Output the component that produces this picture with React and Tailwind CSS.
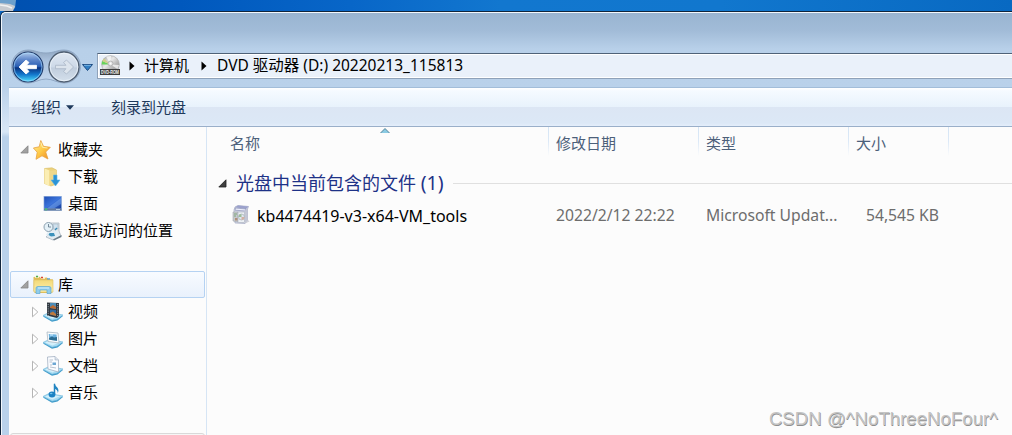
import React from "react";

function NavButtons() {
  return (
    <svg width="88" height="38" viewBox="9 48 88 38" className="block shrink-0">
      <defs>
        <linearGradient id="back" x1="0" y1="0" x2="0" y2="1">
          <stop offset="0" stopColor="#b4cdec" />
          <stop offset=".25" stopColor="#6088cb" />
          <stop offset=".48" stopColor="#2a5fb4" />
          <stop offset=".53" stopColor="#0a3280" />
          <stop offset=".75" stopColor="#1478cc" />
          <stop offset="1" stopColor="#4fe4ff" />
        </linearGradient>
        <linearGradient id="fwd" x1="0" y1="0" x2="0" y2="1">
          <stop offset="0" stopColor="#e0e8f2" />
          <stop offset=".5" stopColor="#cdd9e8" />
          <stop offset=".53" stopColor="#c0cddd" />
          <stop offset="1" stopColor="#d5e0ec" />
        </linearGradient>
        <linearGradient id="well" x1="0" y1="0" x2="0" y2="1">
          <stop offset="0" stopColor="#8fa5bf" />
          <stop offset=".3" stopColor="#a9c0dc" />
          <stop offset="1" stopColor="#c5d9f0" />
        </linearGradient>
      </defs>
      <path d="M28 50C35 50 38 53 46 53S57 50 64 50A16.500 16.500 0 0 1 64 83C57 83 53 79 46 79S35 83 28 83A16.500 16.500 0 0 1 28 50Z" fill="url(#well)" stroke="#8ca4c1" strokeWidth=".9" />
      <circle cx="28" cy="67" r="15" fill="url(#back)" stroke="#223d6c" strokeWidth="1.100" />
      <circle cx="28" cy="67" r="14" fill="none" stroke="#a9dcff" strokeOpacity=".65" />
      <path d="M19 67L26 60L29 62.500L26.500 65.300H36.500V68.700H26.500L29 71.500L26 74Z" fill="#fff" stroke="#fff" strokeWidth=".8" strokeLinejoin="round" />
      <circle cx="64" cy="67" r="15" fill="url(#fwd)" stroke="#4e5d70" strokeWidth="1.400" />
      <circle cx="64" cy="67" r="13.800" fill="none" stroke="#eef5fb" strokeOpacity=".8" />
      <path d="M73.500 67L66.500 60L63.500 62.500L66 65.300H55.500V68.700H66L63.500 71.500L66.500 74Z" fill="#dce4ed" stroke="#a9b6c6" strokeWidth=".8" strokeLinejoin="round" />
      <path d="M82.500 64.500H92.500L87.500 70.500Z" fill="#317fc4" stroke="#1c4b82" strokeLinejoin="round" />
      <path d="M84 65.300H91" stroke="#8ec5ee" strokeWidth=".8" />
    </svg>
  );
}

function DvdIcon() {
  return (
    <svg width="22" height="22" viewBox="0 0 22 22" className="ml-[2px] shrink-0 overflow-visible">
      <defs>
        <linearGradient id="disc" x1="0" y1="0" x2="1" y2="1">
          <stop offset="0" stopColor="#a0a0a0" />
          <stop offset=".4" stopColor="#e8e8e8" />
          <stop offset=".65" stopColor="#b4b4b4" />
          <stop offset="1" stopColor="#8d8d8d" />
        </linearGradient>
      </defs>
      <circle cx="10.500" cy="9.500" r="8.800" fill="url(#disc)" stroke="#aaa" strokeWidth=".7" />
      <path d="M10.500 9.500L2 6L1.700 9.500Z" fill="#68d45b" />
      <path d="M10.500 9.500L2 6L4 3.500Z" fill="#cfd08a" />
      <path d="M10.500 9.500L6 1.500L11 1Z" fill="#fff" opacity=".7" />
      <path d="M10.500 9.500L19 10L17.500 14Z" fill="#fff" opacity=".7" />
      <circle cx="10.500" cy="8.500" r="2.500" fill="#e2e2e2" stroke="#aaa" strokeWidth=".8" />
      <circle cx="10.500" cy="8.500" r=".9" fill="#fff" />
      <rect x="0" y="14" width="20" height="6" fill="#3c3c3c" />
      <text x="1" y="19" fontSize="5" fontWeight="700" fontFamily="Liberation Sans" fill="#eee" textLength="18" lengthAdjust="spacingAndGlyphs">DVD-ROM</text>
    </svg>
  );
}

function StarIcon() {
  return (
    <svg width="18" height="20" viewBox="0 0 18 20">
      <defs>
        <linearGradient id="star" x1="0" y1="0" x2="1" y2="1">
          <stop offset="0" stopColor="#fff0a0" />
          <stop offset=".5" stopColor="#ffcb48" />
          <stop offset="1" stopColor="#ed8620" />
        </linearGradient>
      </defs>
      <path d="M7.800 .5L10.500 6.300L17.300 7.300L12.700 12L15 19L9 15.800L3 19.300L4.200 12.300L.4 8L6.200 6.800Z" fill="url(#star)" stroke="#e7a242" strokeWidth=".8" strokeLinejoin="round" />
      <path d="M7.800 2.500L9.500 7.300L14.500 8" fill="none" stroke="#fff6c2" strokeWidth=".8" />
    </svg>
  );
}

function DownloadIcon() {
  return (
    <svg width="20" height="20" viewBox="0 0 20 20">
      <path d="M1.500 1.500L9 .8L13.500 3V17L8 19L1.500 16.500Z" fill="#ecd27e" stroke="#d9bc62" strokeWidth=".6" />
      <path d="M1.500 1.500L6.500 3.500V19.200L1.500 16.500Z" fill="#fbeeb4" />
      <path d="M6.500 4L13.500 3V15L6.500 18Z" fill="#efd88b" />
      <path d="M10.500 8H14V13H17L12.500 19L8 13H10.500Z" fill="#2b93d6" stroke="#5bb7e9" strokeWidth=".6" />
    </svg>
  );
}

function DesktopIcon() {
  return (
    <svg width="20" height="20" viewBox="0 0 20 20">
      <defs>
        <linearGradient id="desk" x1="0" y1="0" x2="1" y2="1">
          <stop offset="0" stopColor="#1f4fb6" />
          <stop offset=".5" stopColor="#3b73da" />
          <stop offset="1" stopColor="#173e9c" />
        </linearGradient>
      </defs>
      <rect x=".5" y="2" width="18.500" height="15" fill="#a9bfdf" />
      <rect x="1.200" y="2.600" width="17" height="12" fill="url(#desk)" />
      <path d="M4 14.500L18 4V10L11 14.500Z" fill="#79a9f0" opacity=".5" />
      <rect x="1" y="14.500" width="17.500" height="2" fill="#60789c" />
      <circle cx="3" cy="15.300" r="1.200" fill="#49b77d" />
      <path d="M13 15.500H17" stroke="#c7d8ed" strokeWidth=".8" />
    </svg>
  );
}

function RecentIcon() {
  return (
    <svg width="20" height="20" viewBox="0 0 20 20">
      <path d="M8 2H16V10L18 15L10 19L3 16L8 11Z" fill="#e3e9ee" stroke="#a2afba" strokeWidth=".7" />
      <path d="M10 3H15V8H10Z" fill="#d0e1ee" stroke="#a3b5c5" strokeWidth=".6" />
      <path d="M5 10H14L16 15L9 17L3 14Z" fill="#e2edf4" />
      <path d="M6.500 12H11L12 15L8 15.500L5.500 14Z" fill="#3c91bb" />
      <path d="M10 18.500L18.500 14V16L11 19.500Z" fill="#6b7d8a" />
      <circle cx="5.500" cy="6" r="4.500" fill="#e3f0f7" stroke="#8da1b0" />
      <path d="M5.500 3V6H8" stroke="#5a7183" fill="none" strokeWidth=".8" />
      <path d="M12 9L14 7" stroke="#3589b5" strokeWidth="1.200" />
    </svg>
  );
}

function LibraryIcon() {
  return (
    <svg width="21" height="20" viewBox="0 0 21 20">
      <defs>
        <linearGradient id="lib" x1="0" y1="0" x2="0" y2="1">
          <stop offset="0" stopColor="#f2d978" />
          <stop offset="1" stopColor="#fff0ac" />
        </linearGradient>
      </defs>
      <path d="M.5 2L6 1.500L8 3L14 2.500L15 4L20 4.500V17L18 18H2L.5 16Z" fill="#dfbd57" />
      <path d="M2 2H6M8 3H12" stroke="#fff8de" strokeWidth="1.500" />
      <path d="M3 1.500H5" stroke="#4eab4b" strokeWidth="1.500" />
      <path d="M8 2.500H10" stroke="#d94534" strokeWidth="1.500" />
      <path d="M14 4H17" stroke="#4297d6" strokeWidth="1.300" />
      <path d="M1 5H20V17H1Z" fill="url(#lib)" stroke="#e1c268" strokeWidth=".6" />
      <path d="M3 18.500V13Q3 11.500 5 11.500H16Q18 11.500 18 13V18.500H14V15H7V18.500Z" fill="#91cceb" stroke="#5da9d0" strokeWidth=".7" />
      <path d="M5 13H16" stroke="#d4f1ff" />
    </svg>
  );
}

function Tray() {
  return (
    <>
      <path d="M0 14.500L6 11.500L20 14L14.500 18.500L9 19.700Z" fill="#3e9ac9" />
      <path d="M0 13.500L6 10.500L20 13L14 17.200L9 18.300Z" fill="#a9dcf3" stroke="#65b2d8" strokeWidth=".6" />
      <path d="M2 13.500L7 11.500L17 13.200L9.500 16.500Z" fill="#d4f0fb" />
    </>
  );
}

function VideoIcon() {
  return (
    <svg width="20" height="20" viewBox="0 0 20 20">
      <Tray />
      <path d="M4 .5L16 1V14L14 16L4 13.500Z" fill="#323941" />
      <path d="M7 1H13V7L7 6Z" fill="#4d8cb6" />
      <path d="M7 7.500L13 8V14L7 12.500Z" fill="#326ba0" />
      <path d="M7 5L10 3L13 5V7L7 6Z" fill="#bc6b34" />
      <path d="M7 11L10 9.500L13 12V14L7 12.500Z" fill="#c07a3c" />
      <path d="M5.200 2V14M14.700 2V15" stroke="#aab4bc" strokeWidth=".9" strokeDasharray="1 1.200" />
    </svg>
  );
}

function PictureIcon() {
  return (
    <svg width="20" height="20" viewBox="0 0 20 20">
      <Tray />
      <path d="M4 3L15 4L16 14L5 12.500Z" fill="#fafcfd" stroke="#a9b8c3" strokeWidth=".8" />
      <path d="M5.700 5L13.500 5.600L14.200 11.800L6.300 10.800Z" fill="#6cb3e1" />
      <path d="M6 9L9 7.500L11 8.500L14 8V11.800L6.300 10.800Z" fill="#2c6c91" />
      <path d="M7 6H10" stroke="#d9f1ff" />
    </svg>
  );
}

function DocumentIcon() {
  return (
    <svg width="20" height="20" viewBox="0 0 20 20">
      <Tray />
      <path d="M4.500 1L12 .5L15.500 4V16L5 13Z" fill="#fafcff" stroke="#a4b1c3" strokeWidth=".8" />
      <path d="M12 .5V4H15.500" fill="#d9e1eb" stroke="#a4b1c3" strokeWidth=".6" />
      <path d="M6.500 4H10M6.500 6H9M7 11L13 12M7 9H9" stroke="#a6b2c1" strokeWidth=".8" />
      <path d="M9.500 6.500H13V9H9.500Z" fill="#6ba6d2" />
    </svg>
  );
}

function MusicIcon() {
  return (
    <svg width="20" height="20" viewBox="0 0 20 20">
      <Tray />
      <path d="M11.500 .8V11" stroke="#2386c3" strokeWidth="1.500" />
      <path d="M11.200 .3Q12.500 3 14.300 4.500Q16.300 7 14.800 10Q14.800 6.500 11.200 5.500Z" fill="#2386c3" />
      <ellipse cx="9" cy="11.500" rx="3.400" ry="3" fill="#1c82c3" />
      <ellipse cx="8.200" cy="10.500" rx="1.300" ry=".8" fill="#71c4ee" />
    </svg>
  );
}

function PackageIcon() {
  return (
    <svg width="19" height="20" viewBox="0 0 19 20">
      <path d="M3 2L6 .5L16.500 1.500L15.500 4V16L13 18.500L3 18L2 5Z" fill="#d5d9e9" stroke="#a4a9c2" strokeWidth=".7" />
      <path d="M3 2.200L6 .5L16.500 1.500L14 4Z" fill="#9ba1cc" />
      <path d="M3.500 3L14 4L13.500 6L3 5.200Z" fill="#eceefb" stroke="#8086ad" strokeWidth=".6" />
      <path d="M13 5.500L15.500 3.500V16L13 18.500Z" fill="#c3c6d4" />
      <path d="M13 18.500L17.500 16.500L16 15Z" fill="#d2d2d8" />
      <path d="M1 7H6V17L1 16Z" fill="#c5c9cc" stroke="#a4aab0" strokeWidth=".6" />
      <rect x="6" y="7" width="6.500" height="10.500" fill="#edf0f4" stroke="#a9b0bc" strokeWidth=".6" />
      <circle cx="9.500" cy="12" r="3" fill="#dfe5ee" stroke="#9ca7ae" strokeWidth=".6" />
      <path d="M6.500 12A3 3 0 0 1 9.500 9V12Z" fill="#9bbd98" />
      <path d="M9.500 12H12.500A3 3 0 0 1 9.500 15Z" fill="#d2b0a2" />
      <path d="M2 9H5M2 11H4" stroke="#7fa57a" strokeWidth="1" />
      <path d="M3 13H5.500V15.500H3Z" fill="#b0917c" />
    </svg>
  );
}

function OpenMark({ dark = false }) {
  return (
    <svg width="9" height="9" viewBox="0 0 9 9" className="shrink-0">
      <path d="M8 .8V8H.8Z" fill={dark ? "#404040" : "#a1a1a1"} stroke={dark ? "#202020" : "#858585"} strokeWidth=".8" />
    </svg>
  );
}

function ClosedMark() {
  return (
    <svg width="8" height="12" viewBox="0 0 8 12" className="shrink-0">
      <path d="M1.500 1.200L6.800 6L1.500 10.800Z" fill="#fff" stroke="#b5b5b5" />
    </svg>
  );
}

function Crumb() {
  return (
    <svg width="6" height="10" viewBox="0 0 6 10" className="shrink-0">
      <path d="M.5 .5L5.500 5L.5 9.500Z" fill="#000" />
    </svg>
  );
}

function SectionRow({ icon, label, selected = false }) {
  return (
    <div className={"mx-px flex h-[27px] shrink-0 items-center rounded-[2px] border pl-[9px] " + (selected ? "border-[#b5d2f2] bg-gradient-to-b from-[#f8fbff] to-[#e9f1fc]" : "border-transparent")}>
      <OpenMark />
      <span className="ml-[4px] flex w-[25px]">{icon}</span>
      <span>{label}</span>
    </div>
  );
}

function ItemRow({ icon, label, expandable = false }) {
  return (
    <div className="flex h-[27px] shrink-0 items-center pl-[22px]">
      <span className="w-[12px]">{expandable && <ClosedMark />}</span>
      <span className="flex w-[25px]">{icon}</span>
      <span>{label}</span>
    </div>
  );
}

function Column({ width, label }) {
  return (
    <div className={"flex h-full shrink-0 " + width}>
      <span className="flex-1 pl-[7px] leading-[33px]">{label}</span>
      <span className="h-[29px] w-px bg-gradient-to-b from-[#d5e5f5] via-[#dce9f7] to-[#fcfcfc]" />
    </div>
  );
}

export default function App() {
  return (
    <div className="relative flex h-[435px] w-[1012px] flex-col overflow-hidden bg-[#0b67c4] text-[15px] text-black [font-family:'Noto_Sans','Noto_Sans_CJK_SC',sans-serif]">
      <div className="h-[11px] shrink-0 bg-[linear-gradient(90deg,#0050af_0px,#0058bd_180px,#0866c8_350px,#1277cf_500px,#1177ce_720px,#0869c2_1012px)]">
        <svg width="20" height="11" viewBox="0 0 20 11" className="block">
          <path d="M0 0H16L15 8L11 11H0Z" fill="#6ca0cc" />
          <path d="M0 3L10 4L15 6L13 11H0Z" fill="#c7cbd0" />
          <path d="M0 5L7 6L12 8" stroke="#f1f2f2" fill="none" strokeWidth="1.500" />
        </svg>
      </div>
      <div className="flex min-h-0 flex-1 flex-col rounded-tl-[6px] border-l border-t border-[#10243b] bg-[#b9d1ea]">
        <div className="flex min-h-0 flex-1 flex-col rounded-tl-[5px] border-l border-t border-[#f2f7fc] bg-[linear-gradient(180deg,#99b4d1_0px,#a2bcd8_18px,#b8d0e9_36px,#b9d1ea_74px,#d5e4f4_112px,#d7e6f5_119px,#b9d1ea_124px)] pl-[7px]">
          <div className="flex h-[74px] shrink-0 pt-[35px]">
            <NavButtons />
            <div className="mt-[5px] flex h-[26px] flex-1 items-center border border-r-0 border-[#8fa2b9] border-t-[#4f6278] bg-[#eaf1fa] shadow-[inset_0_1px_0_#fff,inset_1px_0_0_#fff,inset_0_-1px_0_#fff]">
              <DvdIcon />
              <span className="ml-[7px] flex w-[15px]"><Crumb /></span>
              <span className="w-[57px] pb-px">计算机</span>
              <span className="flex w-[16px]"><Crumb /></span>
              <span className="whitespace-nowrap pb-px text-[15.500px]">DVD 驱动器 (D:) 20220213_115813</span>
            </div>
          </div>
          <div className="flex h-[40px] shrink-0 items-center border-b border-t border-b-[#9aafc9] border-t-[#a2bdd9] bg-[linear-gradient(180deg,#ffffff_0px,#f5faff_3px,#e8f2fc_19px,#dce6f4_19px,#dce8f6_35px,#e4eefb_38px)] pl-[22px] text-[#1e395b]">
            <span>组织</span>
            <svg width="8" height="5" viewBox="0 0 8 5" className="ml-[5px]"><path d="M0 .3H8L4 4.700Z" fill="#1e395b" /></svg>
            <span className="ml-[37px]">刻录到光盘</span>
          </div>
          <div className="flex min-h-0 flex-1 bg-[#fcfcfc]">
            <aside className="flex w-[198px] shrink-0 flex-col overflow-hidden border-r border-[#d6e5f5] pt-[9px]">
              <SectionRow icon={<StarIcon />} label="收藏夹" />
              <ItemRow icon={<DownloadIcon />} label="下载" />
              <ItemRow icon={<DesktopIcon />} label="桌面" />
              <ItemRow icon={<RecentIcon />} label="最近访问的位置" />
              <div className="h-[27px] shrink-0" />
              <SectionRow icon={<LibraryIcon />} label="库" selected />
              <ItemRow icon={<VideoIcon />} label="视频" expandable />
              <ItemRow icon={<PictureIcon />} label="图片" expandable />
              <ItemRow icon={<DocumentIcon />} label="文档" expandable />
              <ItemRow icon={<MusicIcon />} label="音乐" expandable />
              <div className="mx-px mt-[27px] h-[10px] shrink-0 rounded-[3px] border border-[#d9d9d9] bg-[#f6f6f6]" />
            </aside>
            <main className="flex min-w-0 flex-1 flex-col">
              <div className="relative flex h-[33px] shrink-0 pl-[16px] text-[#4c607a]">
                <svg width="10" height="6" viewBox="0 0 10 6" className="absolute left-[173px] top-[1px]"><path d="M.5 5L5 .5L9.500 5Z" fill="#8bcbe3" /><path d="M.5 5L5 .5L9.500 5" stroke="#3c6c85" fill="none" strokeWidth=".8" /></svg>
                <Column width="w-[326px]" label="名称" />
                <Column width="w-[150px]" label="修改日期" />
                <Column width="w-[150px]" label="类型" />
                <Column width="w-[100px]" label="大小" />
              </div>
              <div className="mt-[10px] flex h-[27px] items-center pl-[11px]">
                <OpenMark dark />
                <span className="ml-[9px] whitespace-nowrap pb-px text-[18px] text-[#1e3287]">光盘中当前包含的文件 <span className="text-[19.500px] leading-none">(1)</span></span>
                <span className="ml-[9px] h-px flex-1 bg-[#e0e0e0]" />
              </div>
              <div className="mt-[5px] flex h-[27px] items-center pl-[25px] text-[15.700px] text-[#6d6d6d]">
                <span className="flex w-[25px] pb-[2px]"><PackageIcon /></span>
                <span className="w-[299px] whitespace-nowrap text-[16px] text-black">kb4474419-v3-x64-VM_tools</span>
                <span className="w-[150px] whitespace-nowrap">2022/2/12 22:22</span>
                <span className="w-[150px] whitespace-nowrap">Microsoft Updat...</span>
                <span className="w-[83px] whitespace-nowrap text-right">54,545 KB</span>
              </div>
            </main>
          </div>
        </div>
      </div>
      <div className="absolute bottom-[5px] right-[14px] whitespace-nowrap text-[18.650px] leading-[22px] text-[#c4c4c4] [font-family:'Liberation_Sans',sans-serif] [text-shadow:0.5px_0.5px_0_#8f8f8f]">CSDN @^NoThreeNoFour^</div>
    </div>
  );
}
